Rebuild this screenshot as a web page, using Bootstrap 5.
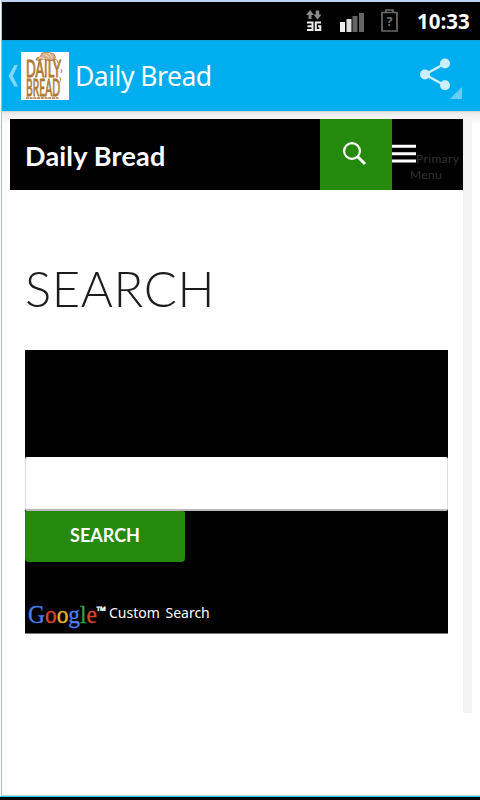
<!DOCTYPE html>
<html lang="en">
<head>
<meta charset="utf-8">
<meta name="viewport" content="width=device-width, initial-scale=1">
<title>Daily Bread</title>
<link href="https://cdn.jsdelivr.net/npm/bootstrap@5.3.0/dist/css/bootstrap.min.css" rel="stylesheet">
<style>
body{font-family:"Noto Sans","Open Sans",sans-serif;background:#fff;overflow:hidden}
.device{width:480px;height:800px;padding-left:1px;background:#fff}
.screen{height:796px;border-left:1px solid #a9c0de;border-top:2px solid #bdd5ee;border-bottom:1px solid #c3cdd8}
.edge{margin-left:-1px;height:4px;background:#000;border-top:1px solid #19dcf5}
.status{height:38px;background:#000;padding-right:10px}
.clock{font:700 20.5px/38px "Open Sans",sans-serif;width:53px;white-space:nowrap}
.appbar{height:71px;background:#00aeef;border-top:1px solid #14a0d2;padding:0 0 1px 6px}
.apptitle{font:400 26.5px/70px "Noto Sans",sans-serif;letter-spacing:-.5px;margin-left:6px;white-space:nowrap}
.web{background:linear-gradient(#c5c5c5 0,#e6e6e6 1px,#f0f0f0 4px,#fff 14px);padding:8px 8px 0}
.site{width:453px;height:594px;background:#fff}
.rail{width:9px;height:594px;background:#f4f3f4}
.masthead{height:71px;background:#000;font-family:Lato,sans-serif}
.brand{font:700 27px/74px Lato,sans-serif;letter-spacing:.2px;padding-left:15px;width:310px;height:71px;white-space:nowrap}
.find{width:72px;background:#24890d}
.primary{width:71px;padding-top:20px;font:400 12px/16px Lato,sans-serif;color:#333;letter-spacing:.35px}
.primary svg{vertical-align:top}
.primary .second{margin-left:-6px}
.heading{font:300 49px/54px Lato,sans-serif;letter-spacing:.6px;color:#1d1d1d;margin:71px 0 0 15px}
.finder{margin:35px 15px 0;height:284px;background:#000;padding-top:107px;border-bottom:1px solid #777}
.finder .form-control{height:54px;border:1px solid #ddd;border-top-color:#fff;border-bottom:2px solid #bbb;border-radius:2px;padding:0 8px}
.finder .btn{width:160px;height:51px;background:#24890d;border:0;border-radius:0 2px 4px 4px;color:#fff;font:700 18px/48px Lato,sans-serif;padding:0 0 3px}
.credit{height:36px;margin-top:34px;padding-left:3px}
.custom{font:400 14px/20px "Noto Sans",sans-serif;word-spacing:2px;white-space:nowrap;margin-top:-1px}
</style>
<script src="https://cdn.jsdelivr.net/npm/bootstrap@5.3.0/dist/js/bootstrap.bundle.min.js"></script>
</head>
<body>
<div class="device">
<div class="screen">
  <div class="status d-flex align-items-center justify-content-end text-white">
    <svg width="111" height="38" viewBox="306 2 111 38">
      <path d="M310 10l4 5h-2.500v4h-3v-4h-2.500zM317.500 19.500l-4-5h2.300v-4h3.400v4h2.300z" fill="#8c8c8c"/>
      <path d="M307 22.500h5.500v7.500H307M307.500 26.200h5M321 22.500h-5.200V30h4.500v-3.700H318" fill="none" stroke="#eee" stroke-width="2"/>
      <path d="M340 22h5v10h-5z" fill="#eee"/><path d="M346.500 19h5v13h-5z" fill="#ddd"/>
      <path d="M352.500 16h5v16h-5zM359 13h5v19h-5z" fill="#666"/>
      <path d="M382 12.500h15V31h-15zM386 12v-2h7v2" fill="none" stroke="#6a6a6a" stroke-width="1.700"/>
      <text x="389.700" y="26" text-anchor="middle" font-family="Open Sans" font-weight="700" font-size="12" fill="#777">?</text>
    </svg>
    <div class="clock">10:33</div>
  </div>
  <div class="appbar d-flex align-items-center text-white">
    <svg width="13" height="24" viewBox="0 0 13 24"><path d="M10 1L6.500 1 .5 12l6 10.500H10L4.800 12z" fill="#80d6f7"/></svg>
    <svg width="48" height="48" viewBox="0 0 48 48">
      <path d="M0 0h48v48H0z" fill="#fff"/>
      <path d="M15 8q0-3 4-3l2-4q6-2 12 1 3 4 0 6-5 2-10-1-5 2-8 1z" fill="#d8b18a" stroke="#a97849" stroke-width=".8"/>
      <path d="M18 5l6 2M23 2l5 3M28 1l3 5" stroke="#f3ddc2" stroke-width="1" fill="none"/>
      <text transform="translate(5 0) scale(1 1.850)" font-family="Lato" font-weight="400" font-size="12.500" fill="#c98d3c" stroke="#a06a28" stroke-width=".5"><tspan x="0" y="13.300" textLength="35" lengthAdjust="spacingAndGlyphs">DAILY</tspan><tspan x="0" y="23.700" textLength="34" lengthAdjust="spacingAndGlyphs">BREAD</tspan></text>
      <path d="M33 7q4 0 4 4M40 17q2 2 0 4M39 25q2 4-1 6" stroke="#be8742" fill="none"/>
      <path d="M5 46h33" stroke="#a97335" stroke-width="1.500" stroke-dasharray="3 .7"/>
    </svg>
    <span class="apptitle">Daily Bread</span>
    <svg class="ms-auto" width="64" height="70" viewBox="416 41 64 70">
      <path d="M445 63.500L425 74.500 445 85.500" fill="none" stroke="#cceffc" stroke-width="2.500"/>
      <g fill="#cceffc"><circle cx="425" cy="74.500" r="5"/><circle cx="445" cy="63.500" r="5"/><circle cx="445" cy="85.300" r="5"/></g>
      <path d="M462 87v12h-12z" fill="#66cef5"/>
    </svg>
  </div>
  <div class="web d-flex">
    <main class="site">
      <header class="masthead d-flex text-white">
        <div class="brand">Daily Bread</div>
        <div class="find">
          <svg width="72" height="71" viewBox="320 119 72 71"><circle cx="352" cy="151" r="7.900" fill="none" stroke="#fff" stroke-width="2.200"/><path d="M357.500 156.500l7.500 7.500" stroke="#fff" stroke-width="3"/></svg>
        </div>
        <nav class="primary d-flex">
          <svg class="flex-shrink-0" width="24" height="28" viewBox="0 0 24 28"><path d="M0 7.300h24M0 14.700h24M0 22h24" stroke="#fff" stroke-width="3"/></svg>
          <span class="pt-2 mt-1">Primary<br><span class="second">Menu</span></span>
        </nav>
      </header>
      <h1 class="heading">SEARCH</h1>
      <form class="finder" onsubmit="return false">
        <input class="form-control" type="text" aria-label="Search">
        <button class="btn d-block" type="submit">SEARCH</button>
        <div class="credit d-flex">
          <svg width="81" height="36" viewBox="28 597 81 36">
            <text y="624" x="28" font-family="Liberation Serif" font-size="24.500" textLength="69" lengthAdjust="spacingAndGlyphs" stroke-width=".3"><tspan fill="#4c7fec" stroke="#4c7fec">G</tspan><tspan fill="#d8452f" stroke="#d8452f">o</tspan><tspan fill="#e8b923" stroke="#e8b923">o</tspan><tspan fill="#4c7fec" stroke="#4c7fec">g</tspan><tspan fill="#35a043" stroke="#35a043">l</tspan><tspan fill="#d8452f" stroke="#d8452f">e</tspan></text>
            <text x="96.500" y="616" font-family="Open Sans" font-weight="700" font-size="12" fill="#fff" stroke="#fff" stroke-width=".4" textLength="10" lengthAdjust="spacingAndGlyphs">™</text>
          </svg>
          <span class="custom text-white pt-2">Custom Search</span>
        </div>
      </form>
    </main>
    <div class="rail"></div>
  </div>
</div>
<div class="edge"></div>
</div>
</body>
</html>
